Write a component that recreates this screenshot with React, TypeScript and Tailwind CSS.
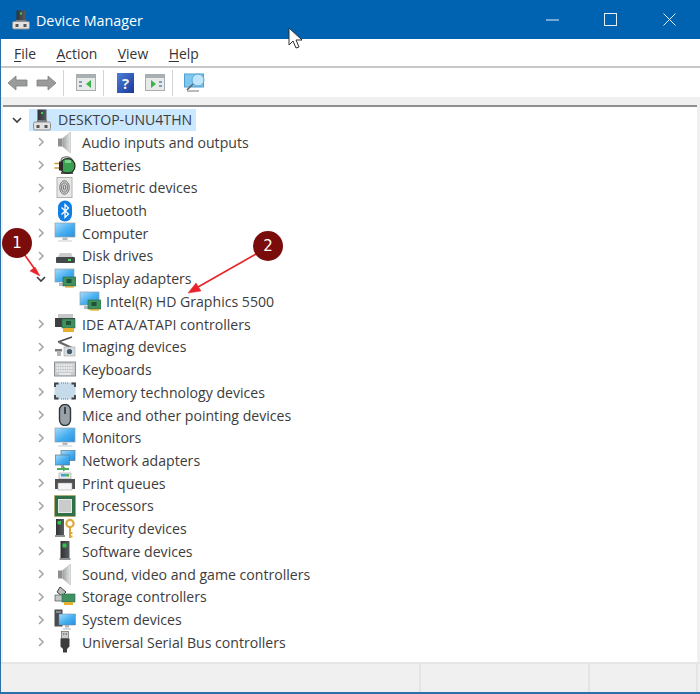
import type { ReactNode } from "react";

const FONT = "font-['Open_Sans','Noto_Sans',sans-serif]";

function Ico({ children }: { children: ReactNode }) {
  return (
    <svg width="22" height="22" viewBox="0 0 22 22" className="shrink-0">
      {children}
    </svg>
  );
}

// shared gradients for the tree icons
function Defs() {
  return (
    <svg width="0" height="0" className="absolute">
      <defs>
        <linearGradient id="screen" x1="0" y1="0" x2="1" y2="1">
          <stop offset="0" stopColor="#a8dcfb" />
          <stop offset="0.55" stopColor="#45aef0" />
          <stop offset="1" stopColor="#2a8fdc" />
        </linearGradient>
        <linearGradient id="cone" x1="0" y1="0" x2="1" y2="0">
          <stop offset="0" stopColor="#9ea1a3" />
          <stop offset="1" stopColor="#e6e7e7" />
        </linearGradient>
        <linearGradient id="tower" x1="0" y1="0" x2="1" y2="0">
          <stop offset="0" stopColor="#2f3133" />
          <stop offset="1" stopColor="#5a5d60" />
        </linearGradient>
        <linearGradient id="help" x1="0" y1="0" x2="1" y2="1">
          <stop offset="0" stopColor="#4f7fd8" />
          <stop offset="1" stopColor="#17389a" />
        </linearGradient>
      </defs>
    </svg>
  );
}

function Monitor() {
  return (
    <>
      <rect x="1" y="1" width="20" height="14" fill="url(#screen)" stroke="#8fa0ac" strokeWidth="0.7" />
      <path d="M8.5 15.5h5v2.5h-5z" fill="#b4babe" />
      <path d="M4 18.5h14v1H4z" fill="#c6cacc" />
    </>
  );
}

function Card() {
  return (
    <>
      <rect x="1" y="1" width="19" height="13" fill="url(#screen)" stroke="#8fa0ac" strokeWidth="0.7" />
      <path d="M5 15h8v3H5z" fill="#b4babe" />
      <rect x="9" y="9" width="13" height="9" fill="#3f9260" stroke="#2a6644" strokeWidth="0.6" />
      <rect x="12.5" y="11" width="5" height="4" fill="#1f5236" />
      <path d="M11 18h9v1.6h-9z" fill="#d9a93a" />
    </>
  );
}

function Tower({ x = 7 }: { x?: number }) {
  return (
    <>
      <rect x={x} y="1" width="9" height="17" fill="url(#tower)" />
      <rect x={x + 2} y="3.5" width="4" height="4" fill="#33c24d" />
      <path d={`M${x - 1} 18h11v2H${x - 1}z`} fill="#8e9295" />
    </>
  );
}

function Speaker() {
  return (
    <>
      <path d="M4 7.5h4.5v8H4z" fill="#8d9092" />
      <path d="M8.5 7.5l8-6.5v21l-8-6.5z" fill="url(#cone)" stroke="#b0b3b5" strokeWidth="0.5" />
    </>
  );
}

const icons: Record<string, ReactNode> = {
  audio: <Speaker />,
  battery: (
    <>
      <path d="M7 7c0-5 9-6 12 0" fill="none" stroke="#777" strokeWidth="1.2" />
      <circle cx="13.5" cy="12" r="7.5" fill="#3aa150" stroke="#222" strokeWidth="1.2" />
      <path d="M11 6h6v3h-6z" fill="#7fd08c" />
      <path d="M0.5 9.5h7M0.5 14h7" stroke="#c99a3a" strokeWidth="1.6" />
      <rect x="5" y="7.5" width="4" height="9" fill="#2a2a2a" />
      <path d="M7 19h12" stroke="#333" strokeWidth="1.6" />
    </>
  ),
  biometric: (
    <>
      <rect x="3" y="0.5" width="15" height="20" fill="#e6e9e6" stroke="#aeb3ae" />
      <ellipse cx="10.5" cy="10.5" rx="4.8" ry="6.8" fill="#d0d2d0" stroke="#6a6a6a" strokeWidth="0.9" />
      <ellipse cx="10.5" cy="10.5" rx="3" ry="4.6" fill="none" stroke="#6a6a6a" strokeWidth="0.9" />
      <ellipse cx="10.5" cy="10.5" rx="1.2" ry="2.4" fill="none" stroke="#6a6a6a" strokeWidth="0.9" />
    </>
  ),
  bluetooth: (
    <>
      <rect x="4" y="0.5" width="14" height="21" rx="7" fill="#0f7fe6" />
      <path d="M7.5 7.5l7 6.5-3.5 3.5v-13l3.5 3.5-7 6.5" fill="none" stroke="#fff" strokeWidth="1.3" />
    </>
  ),
  computer: <Monitor />,
  disk: (
    <>
      <path d="M4 12l2-4h11l2 4z" fill="#c9cbcc" />
      <rect x="2" y="12" width="19" height="6" rx="1" fill="#44474a" />
      <rect x="14" y="14" width="3" height="2" fill="#52d566" />
    </>
  ),
  display: <Card />,
  ide: (
    <>
      <path d="M4 1h15v4H4z" fill="#c5c7c8" />
      <path d="M1 5h20v9H1z" fill="#3c3e40" />
      <rect x="8" y="6" width="13" height="9" fill="#3f9260" stroke="#2a6644" strokeWidth="0.6" />
      <rect x="12" y="8" width="5" height="4" fill="#1f5236" />
      <path d="M9 15h11v4H9z" fill="#e8ae2e" />
    </>
  ),
  imaging: (
    <>
      <path d="M4 6l14-5" stroke="#4a4a4a" strokeWidth="1.4" />
      <path d="M5 6l13 6" stroke="#6a6a6a" strokeWidth="2.4" />
      <rect x="10" y="11" width="11" height="9" fill="#d9dbdc" stroke="#a2a5a7" strokeWidth="0.6" />
      <circle cx="15.5" cy="15.5" r="2.6" fill="#3d5a6e" />
      <path d="M1 13h7v2.5H1z" fill="#7a7d80" />
      <path d="M3 15.5h4V20H3z" fill="#b4b7b9" />
    </>
  ),
  keyboard: (
    <>
      <rect x="0.5" y="3" width="21" height="14" fill="#c9ccce" stroke="#8f9396" />
      <path d="M2.5 6h17M2.5 9h17M2.5 12h17" stroke="#f6f6f6" strokeWidth="1.6" strokeDasharray="1.6 .7" />
      <path d="M5 15h12" stroke="#f6f6f6" strokeWidth="1.3" />
    </>
  ),
  memory: (
    <>
      <rect x="0.5" y="1.5" width="21" height="17" rx="2" fill="#c6dbea" />
      <path d="M1 6V2.5h3.5M17.5 2.5H21V6M21 14v3.5h-3.5M4.5 17.5H1V14" fill="none" stroke="#3d3f41" strokeWidth="1.8" />
      <path d="M7 2h8M7 18h8" stroke="#666" strokeWidth="0.8" strokeDasharray="1 1" />
    </>
  ),
  mice: (
    <>
      <rect x="5.5" y="0.5" width="11" height="21" rx="5.5" fill="#9aa2a9" stroke="#35383b" strokeWidth="1.4" />
      <path d="M11 3v7" stroke="#35383b" strokeWidth="1.8" />
    </>
  ),
  monitors: <Monitor />,
  network: (
    <>
      <rect x="7" y="0.5" width="14" height="10" fill="url(#screen)" stroke="#5f7a8e" strokeWidth="0.7" />
      <rect x="1.5" y="5" width="14" height="10" fill="url(#screen)" stroke="#5f7a8e" strokeWidth="0.7" />
      <path d="M7 15h3v3H7z" fill="#9aa0a4" />
      <path d="M3 19h12" stroke="#4aad5b" strokeWidth="2" />
      <path d="M9 16l4 3-4 2.5z" fill="#4aad5b" />
    </>
  ),
  print: (
    <>
      <path d="M5 1h12v6H5z" fill="#e8eaea" stroke="#8b8b8b" strokeWidth="0.5" />
      <path d="M7 2h4v2.5H7z" fill="#3fa0d8" />
      <path d="M11 2h4v2.5h-4z" fill="#4db85a" />
      <path d="M1 7h20v10H1z" fill="#4f5254" />
      <path d="M4 11h14v7H4z" fill="#f6f6f6" stroke="#999" strokeWidth="0.5" />
    </>
  ),
  processor: (
    <>
      <rect x="0.5" y="0.5" width="21" height="21" fill="#2f6f46" stroke="#c9a24a" strokeWidth="1" strokeDasharray="1 1" />
      <rect x="4.5" y="4.5" width="13" height="13" fill="#c9cccb" stroke="#e6e8e6" />
    </>
  ),
  security: (
    <>
      <rect x="2" y="1" width="8" height="16" fill="url(#tower)" />
      <rect x="3.5" y="3" width="3.5" height="3.5" fill="#33c24d" />
      <path d="M1 17h10v2H1z" fill="#8e9295" />
      <circle cx="16" cy="5.5" r="3.6" fill="none" stroke="#dba83a" strokeWidth="2.2" />
      <path d="M16 9v11M16 15h2.5M16 18.5h2.5" stroke="#dba83a" strokeWidth="2" />
    </>
  ),
  software: <Tower x={6.5} />,
  sound: <Speaker />,
  storage: (
    <>
      <path d="M6 1l6 5-4 4-5-4z" fill="#b9bcbd" stroke="#444" strokeWidth="1" />
      <path d="M1 9h11v6H1z" fill="#c4c7c8" stroke="#555" strokeWidth="0.7" />
      <rect x="8" y="8" width="13" height="8" fill="#3f9260" stroke="#2a6644" strokeWidth="0.6" />
      <path d="M10 16h9v3h-9z" fill="#e8ae2e" />
    </>
  ),
  system: (
    <>
      <rect x="0.5" y="0.5" width="8" height="17" fill="#4a4d50" />
      <path d="M2 3h5" stroke="#ccc" />
      <rect x="5" y="5" width="16.5" height="11" fill="url(#screen)" stroke="#6a8294" strokeWidth="0.5" />
      <path d="M11 16h4v2.5h-4zM9 19.5h8v1H9z" fill="#aeb4b8" />
    </>
  ),
  usb: (
    <>
      <rect x="7.5" y="0.5" width="7" height="7" fill="#c9cbcd" stroke="#666" strokeWidth="0.7" />
      <path d="M9 3h1.4M11.6 3H13" stroke="#444" />
      <path d="M6.5 7.5h9v8l-2.5 2.5v3.5h-4V18l-2.5-2.5z" fill="#3a3c3e" />
    </>
  ),
};

const items: [string, string][] = [
  ["audio", "Audio inputs and outputs"],
  ["battery", "Batteries"],
  ["biometric", "Biometric devices"],
  ["bluetooth", "Bluetooth"],
  ["computer", "Computer"],
  ["disk", "Disk drives"],
  ["display", "Display adapters"],
  ["intel", "Intel(R) HD Graphics 5500"],
  ["ide", "IDE ATA/ATAPI controllers"],
  ["imaging", "Imaging devices"],
  ["keyboard", "Keyboards"],
  ["memory", "Memory technology devices"],
  ["mice", "Mice and other pointing devices"],
  ["monitors", "Monitors"],
  ["network", "Network adapters"],
  ["print", "Print queues"],
  ["processor", "Processors"],
  ["security", "Security devices"],
  ["software", "Software devices"],
  ["sound", "Sound, video and game controllers"],
  ["storage", "Storage controllers"],
  ["system", "System devices"],
  ["usb", "Universal Serial Bus controllers"],
];

function Chevron({ open }: { open?: boolean }) {
  return (
    <svg width="16" height="16" viewBox="0 0 16 16" className="shrink-0">
      <path
        d={open ? "M4 6l4 4 4-4" : "M6 4l4 4-4 4"}
        fill="none"
        stroke={open ? "#3f3f3f" : "#a6a6a6"}
        strokeWidth="1.6"
      />
    </svg>
  );
}

function TreeRow({ id, label }: { id: string; label: string }) {
  if (id === "intel") {
    return (
      <div className="flex h-[22.73px] items-center pl-[76px]">
        <Ico>{icons.display}</Ico>
        <span className="ml-[5px]">{label}</span>
      </div>
    );
  }
  return (
    <div className="flex h-[22.73px] items-center pl-[30px]">
      <Chevron open={id === "display"} />
      <span className="ml-[5px] flex">
        <Ico>{icons[id]}</Ico>
      </span>
      <span className="ml-[6px]">{label}</span>
    </div>
  );
}

function Menu({ first, rest }: { first: string; rest: string }) {
  return (
    <span>
      <span className="underline underline-offset-2">{first}</span>
      {rest}
    </span>
  );
}

function ToolSep() {
  return <div className="h-[26px] w-px bg-[#d4d4d4]" />;
}

function Window({ arrow }: { arrow: "left" | "right" }) {
  return (
    <svg width="20" height="17" viewBox="0 0 20 17">
      <rect x="0.5" y="0.5" width="19" height="16" fill="#e8eaea" stroke="#a9adaf" />
      <rect x="1" y="1" width="18" height="3" fill="#a9b0b3" />
      {arrow === "left" ? (
        <>
          <path d="M3 7h3v2H3zM3 11h3v2H3z" fill="#7d9cc0" />
          <path d="M15 6v8l-5-4z" fill="#38b54a" />
        </>
      ) : (
        <>
          <path d="M14 7h3v2h-3zM14 11h3v2h-3z" fill="#7d9cc0" />
          <path d="M6 6v8l5-4z" fill="#38b54a" />
        </>
      )}
    </svg>
  );
}

function NavArrow({ flip }: { flip?: boolean }) {
  return (
    <svg width="21" height="16" viewBox="0 0 21 16" className={flip ? "-scale-x-100" : ""}>
      <path d="M1 8l8-7v4h11v6H9v4z" fill="#9a9c9c" stroke="#7d7f7f" strokeWidth="0.8" />
    </svg>
  );
}

function DeviceLogo() {
  return (
    <svg width="18" height="22" viewBox="0 0 18 22">
      <rect x="4.5" y="1.5" width="9" height="11" fill="url(#tower)" />
      <rect x="8" y="3.5" width="2" height="2" fill="#3fd05a" />
      <path d="M4 11h10v2H4z" fill="#7a7d80" />
      <rect x="0.5" y="12.5" width="17" height="7.5" rx="1.5" fill="#e2e2e2" stroke="#8b8e90" />
      <rect x="3.5" y="15" width="3" height="3" fill="#555" />
      <rect x="11.5" y="15" width="3" height="3" fill="#555" />
    </svg>
  );
}

export default function App() {
  return (
    <div className={`${FONT} relative flex h-[694px] w-[700px] flex-col overflow-hidden bg-[#f0f0f0] text-[14.1px] text-[#3c3c3c]`}>
      <Defs />
      {/* title bar */}
      <div className="flex h-[39px] shrink-0 items-center bg-[#0063b1] pl-[12px] text-white">
        <DeviceLogo />
        <span className="ml-[6px] pt-[2px] text-[14.3px]">Device Manager</span>
        <div className="ml-auto flex items-center pr-[24px]">
          <svg width="13" height="2" viewBox="0 0 13 2">
            <path d="M0 1h13" stroke="#e4eef7" strokeWidth="1" />
          </svg>
          <svg width="13" height="13" viewBox="0 0 13 13" className="ml-[45px]">
            <rect x="0.5" y="0.5" width="12" height="12" fill="none" stroke="#e4eef7" />
          </svg>
          <svg width="13" height="13" viewBox="0 0 13 13" className="ml-[46px]">
            <path d="M0.5 0.5l12 12M12.5 0.5l-12 12" stroke="#e4eef7" />
          </svg>
        </div>
      </div>

      {/* menu */}
      <div className="flex h-[29px] shrink-0 items-center gap-[20.5px] border-b-2 border-[#c8c8c8] bg-white pt-[3px] pl-[14px] text-[13.9px] text-[#333]">
        <Menu first="F" rest="ile" />
        <Menu first="A" rest="ction" />
        <Menu first="V" rest="iew" />
        <Menu first="H" rest="elp" />
      </div>

      {/* toolbar */}
      <div className="flex h-[29px] shrink-0 items-center bg-white pl-[7px]">
        <NavArrow />
        <span className="ml-[8px] flex">
          <NavArrow flip />
        </span>
        <span className="ml-[6px] flex">
          <ToolSep />
        </span>
        <span className="ml-[12px] flex">
          <Window arrow="left" />
        </span>
        <span className="ml-[7px] flex">
          <ToolSep />
        </span>
        <svg width="17" height="20" viewBox="0 0 17 20" className="ml-[13px]">
          <rect width="17" height="20" fill="url(#help)" />
          <text x="8.5" y="15.5" textAnchor="middle" fontSize="15" fontWeight="700" fill="#f0f0f0">?</text>
        </svg>
        <span className="ml-[11px] flex">
          <Window arrow="right" />
        </span>
        <span className="ml-[7px] flex">
          <ToolSep />
        </span>
        <svg width="22" height="20" viewBox="0 0 22 20" className="ml-[11px]">
          <rect x="0.5" y="1" width="19" height="13" fill="#7ec8f0" stroke="#4f9fd0" />
          <circle cx="14" cy="7" r="6" fill="#bfe6fa" stroke="#5aa8d8" />
          <path d="M9 11l-6 6" stroke="#5c6468" strokeWidth="1.6" />
          <path d="M3 18h12" stroke="#9aa0a4" strokeWidth="1.4" />
        </svg>
      </div>

      {/* band above the tree */}
      <div className="h-[8px] shrink-0" />

      {/* tree */}
      <div className="mx-[3px] h-[557px] shrink-0 border-t-2 border-t-[#8f8f8f] bg-white pt-[1.4px]">
        <div className="flex h-[22.73px] items-center pl-[6px]">
          <Chevron open />
          <div className="ml-[4px] flex h-[22px] items-center bg-[#cce8ff] pr-[4px] pl-[2px]">
            <Ico>
              <g transform="translate(2 0)">
                <rect x="4.5" y="0.5" width="9" height="12" fill="url(#tower)" />
                <rect x="8" y="3" width="2" height="2" fill="#3fd05a" />
                <path d="M4 11h10v2H4z" fill="#7a7d80" />
                <rect x="0.5" y="13" width="17" height="8" rx="1.5" fill="#e2e2e2" stroke="#8b8e90" />
                <rect x="3.5" y="16" width="3" height="3" fill="#555" />
                <rect x="11.5" y="16" width="3" height="3" fill="#555" />
              </g>
            </Ico>
            <span className="ml-[5px]">DESKTOP-UNU4THN</span>
          </div>
        </div>
        {items.map(([id, label]) => (
          <TreeRow key={label} id={id} label={label} />
        ))}
      </div>

      {/* status bar */}
      <div className="flex h-[30px] shrink-0 border-t-2 border-[#e6e6e6] pl-[3px]">
        <div className="w-[418px] border-r-2 border-[#e4e4e4]" />
        <div className="w-[169px] border-r-2 border-[#e4e4e4]" />
        <div className="w-[108px] border-r-2 border-[#e4e4e4]" />
      </div>
      <div className="h-[2px] shrink-0 bg-[#2a6fa8]" />
      <div className="absolute top-[39px] bottom-0 left-0 w-px bg-[#2a6fa8]" />

      {/* callouts */}
      <svg width="700" height="694" viewBox="0 0 700 694" className="pointer-events-none absolute top-0 left-0">
        <path d="M24 254l10 14" stroke="#e8242a" strokeWidth="1.6" />
        <path d="M40 276l-10-5 5-4z" fill="#e8242a" stroke="#e8242a" strokeWidth="0.5" />
        <path d="M256 254l-58 33" stroke="#e8242a" strokeWidth="1.6" />
        <path d="M188 293l8-10 5 8z" fill="#e8242a" stroke="#e8242a" strokeWidth="0.5" />
      </svg>
      <div className="absolute top-[228px] left-[2px] flex h-[30px] w-[30px] items-center justify-center rounded-full bg-[#7a0c0c] font-['DejaVu_Sans',sans-serif] text-[15px] text-white">
        1
      </div>
      <div className="absolute top-[231px] left-[253px] flex h-[30px] w-[30px] items-center justify-center rounded-full bg-[#7a0c0c] font-['DejaVu_Sans',sans-serif] text-[15px] text-white">
        2
      </div>

      {/* mouse cursor */}
      <svg width="17" height="24" viewBox="0 0 17 24" className="absolute top-[27px] left-[288px]">
        <path d="M1 1v17l4-4 3 7 3-1-3-7h6z" fill="#fff" stroke="#333" strokeWidth="1" />
      </svg>
    </div>
  );
}
